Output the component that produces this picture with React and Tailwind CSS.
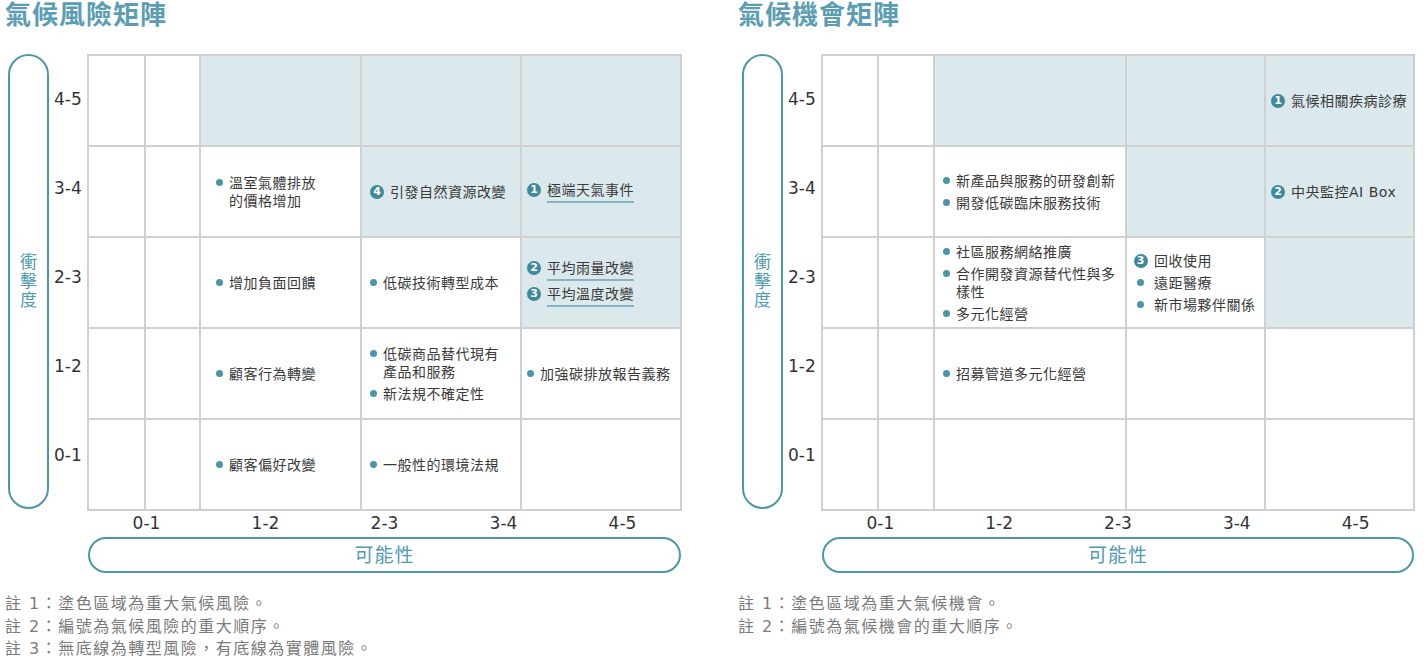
import React from 'react';

// shared font stack: latin from DejaVu, CJK from Noto
const font = "font-['DejaVu_Sans','Noto_Sans_CJK_TC',sans-serif]";

const riskCells = [
  // 4-5
  {}, {}, { shade: true }, { shade: true }, { shade: true },
  // 3-4
  {}, {},
  { pad: 'pl-[15px]', items: [{ m: 'dot', t: ['溫室氣體排放', '的價格增加'] }] },
  { shade: true, pad: 'pl-[8px]', items: [{ m: '4', t: ['引發自然資源改變'] }] },
  { shade: true, pad: 'pl-[5px]', items: [{ m: '1', t: ['極端天氣事件'], u: true }] },
  // 2-3
  {}, {},
  { pad: 'pl-[15px]', items: [{ m: 'dot', t: ['增加負面回饋'] }] },
  { pad: 'pl-[8px]', items: [{ m: 'dot', t: ['低碳技術轉型成本'] }] },
  {
    shade: true,
    pad: 'pl-[5px]',
    items: [
      { m: '2', t: ['平均雨量改變'], u: true },
      { m: '3', t: ['平均溫度改變'], u: true },
    ],
  },
  // 1-2
  {}, {},
  { pad: 'pl-[15px]', items: [{ m: 'dot', t: ['顧客行為轉變'] }] },
  {
    pad: 'pl-[8px]',
    items: [
      { m: 'dot', t: ['低碳商品替代現有', '產品和服務'] },
      { m: 'dot', t: ['新法規不確定性'] },
    ],
  },
  { pad: 'pl-[5px]', items: [{ m: 'dot', t: ['加強碳排放報告義務'] }] },
  // 0-1
  {}, {},
  { pad: 'pl-[15px]', items: [{ m: 'dot', t: ['顧客偏好改變'] }] },
  { pad: 'pl-[8px]', items: [{ m: 'dot', t: ['一般性的環境法規'] }] },
  {},
];

const chanceCells = [
  // 4-5
  {}, {}, { shade: true }, { shade: true },
  { shade: true, pad: 'pl-[5px]', items: [{ m: '1', t: ['氣候相關疾病診療'] }] },
  // 3-4
  {}, {},
  {
    pad: 'pl-[8px]',
    items: [
      { m: 'dot', t: ['新產品與服務的研發創新'] },
      { m: 'dot', t: ['開發低碳臨床服務技術'] },
    ],
  },
  { shade: true },
  { shade: true, pad: 'pl-[5px]', items: [{ m: '2', t: ['中央監控AI Box'] }] },
  // 2-3
  {}, {},
  {
    pad: 'pl-[8px]',
    items: [
      { m: 'dot', t: ['社區服務網絡推廣'] },
      { m: 'dot', t: ['合作開發資源替代性與多', '樣性'] },
      { m: 'dot', t: ['多元化經營'] },
    ],
  },
  {
    pad: 'pl-[6px]',
    wide: true,
    items: [
      { m: '3', t: ['回收使用'] },
      { m: 'dot', t: ['遠距醫療'] },
      { m: 'dot', t: ['新市場夥伴關係'] },
    ],
  },
  { shade: true },
  // 1-2
  {}, {},
  { pad: 'pl-[8px]', items: [{ m: 'dot', t: ['招募管道多元化經營'] }] },
  {}, {},
  // 0-1
  {}, {}, {}, {}, {},
];

const levels = ['4-5', '3-4', '2-3', '1-2', '0-1'];
const axis = ['0-1', '1-2', '2-3', '3-4', '4-5'];

function Marker({ mark, wide }) {
  const slot = wide ? 'w-[15px]' : mark === 'dot' ? 'w-[7px]' : 'w-[14px]';
  return (
    <span className={`${slot} h-[18px] shrink-0 flex items-center justify-center`}>
      {mark === 'dot' ? (
        <span className="w-[7px] h-[7px] rounded-full bg-[#4a96a8]" />
      ) : (
        <span className="w-[14px] h-[14px] rounded-full bg-[#3e899b] text-white text-[11px] font-bold leading-[14px] text-center">
          {mark}
        </span>
      )}
    </span>
  );
}

function Cell({ cell }) {
  return (
    <div
      className={`flex flex-col justify-center gap-[4px] ${cell.shade ? 'bg-[#dbe8ec]' : 'bg-white'} ${cell.pad || ''}`}
    >
      {(cell.items || []).map((it, i) => (
        <div key={i} className="flex items-start gap-[6px]">
          <Marker mark={it.m} wide={cell.wide} />
          <span
            className={`text-[14px] leading-[18px] tracking-[0.5px] text-[#3a3a3a] whitespace-nowrap ${it.u ? 'border-b-2 border-[#84b5c4] pb-[2px]' : ''}`}
          >
            {it.t.map((line, j) => (
              <React.Fragment key={j}>
                {j > 0 && <br />}
                {line}
              </React.Fragment>
            ))}
          </span>
        </div>
      ))}
    </div>
  );
}

function Matrix({ title, cols, cells, notes, pillPad, gridLeft }) {
  return (
    <div className="flex flex-col">
      <h2 className="pl-[5px] h-[30px] text-[26px] leading-[30px] font-bold tracking-[1px] text-[#5b9db2]">
        {title}
      </h2>

      <div className={`flex mt-[24px] ${pillPad}`}>
        {/* vertical axis pill */}
        <div className="w-[41px] h-[455px] rounded-full border-2 border-[#4e97a8] flex flex-col items-center justify-center text-[17px] leading-[19px] text-[#4f9bb0]">
          <span>衝</span>
          <span>擊</span>
          <span>度</span>
        </div>
        <div className="w-[38px] grid grid-rows-[repeat(5,87px)] gap-[2px] py-[2px] pl-[5px]">
          {levels.map((l) => (
            <div key={l} className="flex items-center text-[17px] text-[#333]">
              {l}
            </div>
          ))}
        </div>
        <div className={`grid ${cols} grid-rows-[repeat(5,89px)] gap-[2px] p-[2px] bg-[#d0d0d0]`}>
          {cells.map((c, i) => (
            <Cell key={i} cell={c} />
          ))}
        </div>
      </div>

      <div className={gridLeft}>
        <div className="grid grid-cols-5 h-[26px] pb-[4px]">
          {axis.map((a) => (
            <div key={a} className="flex items-center justify-center text-[17px] text-[#333]">
              {a}
            </div>
          ))}
        </div>
        <div className="ml-[1px] mr-[1px] h-[36px] rounded-full border-2 border-[#4e97a8] flex items-center justify-center text-[19px] text-[#4f9bb0] tracking-[1px]">
          可能性
        </div>
      </div>

      <div className="mt-[20px] pl-[5px] flex flex-col text-[16px] leading-[22.5px] tracking-[1.5px] text-[#7a7a7a]">
        {notes.map((n) => (
          <div key={n}>{n}</div>
        ))}
      </div>
    </div>
  );
}

export default function App() {
  return (
    <div className={`w-[1426px] h-[660px] bg-white overflow-hidden flex ${font}`}>
      <div className="w-[733px] shrink-0">
        <Matrix
          title="氣候風險矩陣"
          cols="grid-cols-[55px_53px_159px_158px_158px] w-[595px]"
          cells={riskCells}
          pillPad="pl-[8px]"
          gridLeft="ml-[87px] w-[595px]"
          notes={[
            '註 1：塗色區域為重大氣候風險。',
            '註 2：編號為氣候風險的重大順序。',
            '註 3：無底線為轉型風險，有底線為實體風險。',
          ]}
        />
      </div>
      <div className="flex-1">
        <Matrix
          title="氣候機會矩陣"
          cols="grid-cols-[54px_54px_190px_137px_147px] w-[594px]"
          cells={chanceCells}
          pillPad="pl-[9px]"
          gridLeft="ml-[88px] w-[594px]"
          notes={['註 1：塗色區域為重大氣候機會。', '註 2：編號為氣候機會的重大順序。']}
        />
      </div>
    </div>
  );
}
